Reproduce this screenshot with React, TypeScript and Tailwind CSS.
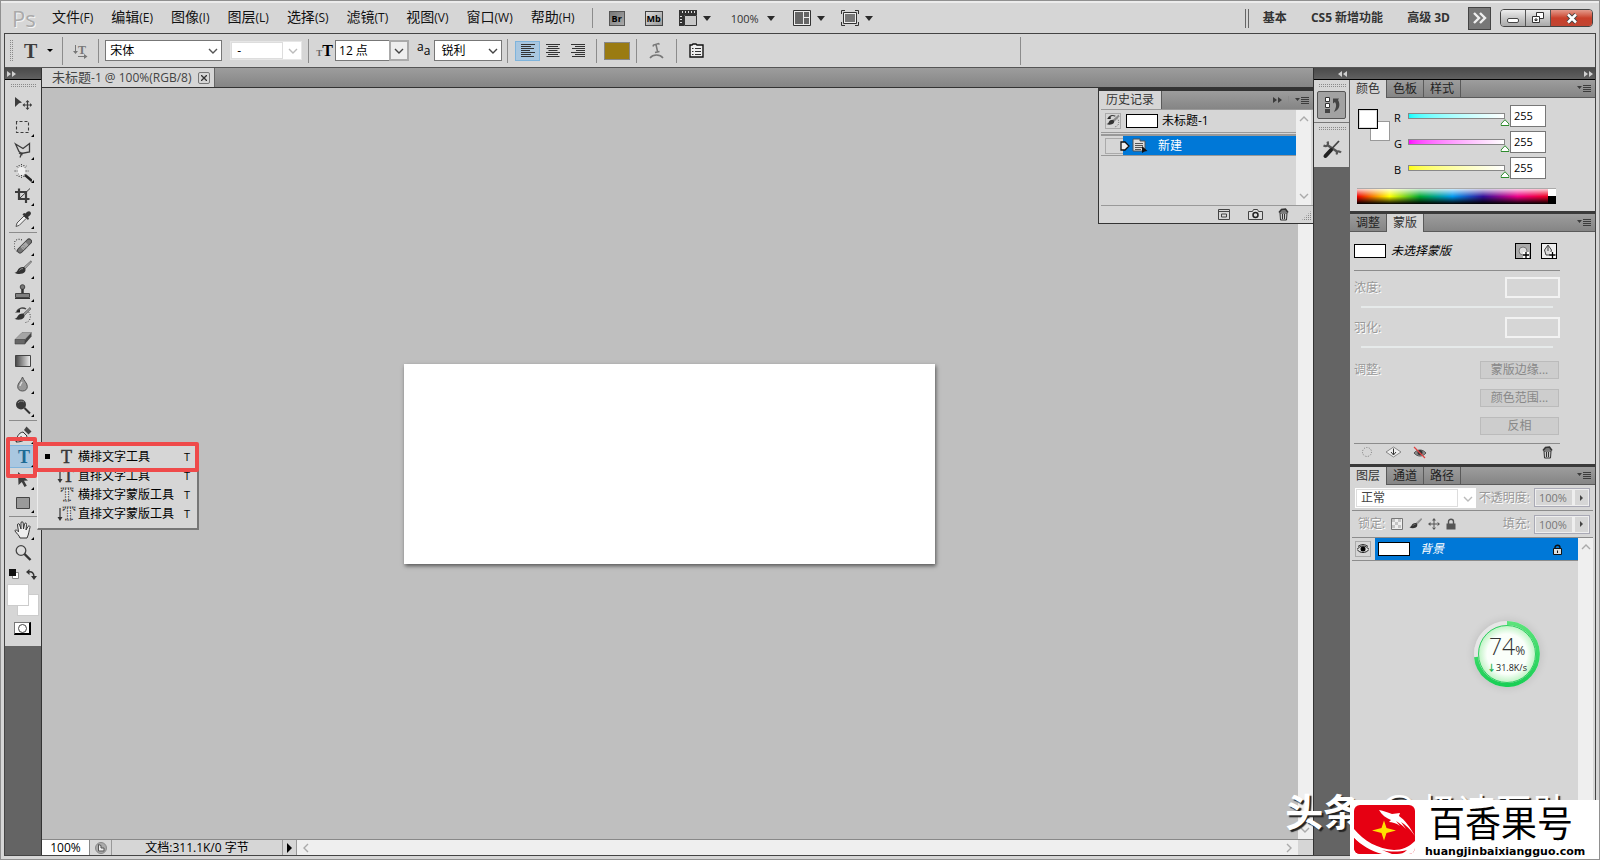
import { useState } from 'react';
import type { ReactNode } from 'react';
import clsx from 'clsx';

interface Tool {
  id: string;
  label: string;
  icon: ReactNode;
  hasMore: boolean;
}

interface ChannelProps {
  name: string;
  track: string;
}

const DARK = '#3c3c3c';

function Icon({ children, size = 18 }: { children: ReactNode; size?: number }) {
  return (
    <svg width={size} height={size} viewBox="0 0 18 18" fill="none" className="shrink-0">
      {children}
    </svg>
  );
}

const brushShape = (
  <>
    <path d="M17 .8 9.500 7.500l1.300 1.600L17.500 2z" fill="#b0b0b0" stroke="#555" strokeWidth=".7" />
    <path d="M10 7c-3-.5-5.500.8-6.500 3.500-.5 1.300-1.500 2-3 2.300 3 1.900 8.500 1.700 10.500-1 1-1.500.5-3.800-1-4.800z" fill="#333" />
    <path d="M5.500 10.500c1-1.500 2-2 3.500-1.800" stroke="#999" strokeWidth=".9" />
  </>
);

const historyBrush = (
  <>
    <path d="M3 5c2-3 6-4 9-2" stroke="#444" strokeWidth="1.500" />
    <path d="m1 6.500 5-3.500v3.500z" fill="#222" />
    <path d="M14.500 6c2 2 2.500 5 1 8-1 1.500-2 2-4 2.500" stroke="#444" strokeDasharray="1 1.500" />
    <path d="M16 1.500 9 8l1.500 1.500L16.800 3z" fill="#999" stroke="#444" strokeWidth=".6" />
    <path d="M9 7.500c-3 0-4.500 1-5.500 3-.5 1.200-1.500 2-3 2.300 3 1.400 7.500 1.200 9.500-1.300 1-1.500.3-3-1-4z" fill="#333" />
  </>
);

const toolGroups: Tool[][] = [
  [
    {
      id: 'move',
      label: '移动工具',
      hasMore: false,
      icon: (
        <>
          <path d="m1 2 7 5.500-3 .8L1 12z" fill={DARK} />
          <path d="M13.500 6v8M9.500 10h8" stroke={DARK} strokeWidth="1.200" />
          <path d="m13.500 5 2 2.200h-4zM13.500 15l2-2.200h-4zM8.500 10l2.200-2v4zM18 10l-2-2v4z" fill={DARK} />
        </>
      ),
    },
    {
      id: 'marquee',
      label: '矩形选框工具',
      hasMore: true,
      icon: <path d="M2.500 3.500v11h12v-11z" stroke={DARK} strokeWidth="1.100" strokeDasharray="3 2" />,
    },
    {
      id: 'lasso',
      label: '多边形套索工具',
      hasMore: true,
      icon: (
        <>
          <path d="M1.500 3 9 7.500 15.500 2.500v8.500L7.500 12.500 5 10.500z" stroke={DARK} strokeWidth="1.300" />
          <path d="m5 12 3.500 2M8 11.500 6 16.500" stroke={DARK} strokeWidth="1.300" />
        </>
      ),
    },
    {
      id: 'wand',
      label: '快速选择工具',
      hasMore: true,
      icon: (
        <>
          <path d="m11 11 7 6" stroke="#222" strokeWidth="2.500" />
          <circle cx="7.500" cy="7" r="4" fill="#eee" />
          <path d="M7.500 0v3M7.500 11v3M.5 7h3M11.500 7h3M2.500 2l2 2M12.500 2l-2 2M2.500 12l2-2M5 1l.5 2M10 1l-.5 2M10.500 10l2 2M5 13l.5-2M10 13l-.5-2" stroke={DARK} strokeDasharray="1.200 1" />
        </>
      ),
    },
    {
      id: 'crop',
      label: '裁剪工具',
      hasMore: true,
      icon: (
        <>
          <path d="M1 5h11v11M5 1.500V12h10.500" stroke={DARK} strokeWidth="2.200" />
          <path d="M5.500 11.500 16 1.500" stroke={DARK} />
        </>
      ),
    },
    {
      id: 'eyedropper',
      label: '吸管工具',
      hasMore: true,
      icon: (
        <>
          <path d="M2 16.500 3 13l7-7 2.300 2.300-7 7z" fill="#eee" stroke="#555" />
          <path d="m8.500 4.500 5.500 5.500 1-1.500-1-1.500C17 5 17.500 3.500 16.500 2c-1.200-1.500-3-1-5 1.500L10 3z" fill="#333" />
        </>
      ),
    },
  ],
  [
    {
      id: 'heal',
      label: '污点修复画笔工具',
      hasMore: true,
      icon: (
        <>
          <path d="M8 3C4 1 0 3 0 8c0 3 1 5 3 6.500" stroke="#222" strokeDasharray="1 1.500" />
          <path d="M6 13.500 15 4.500" stroke="#444" strokeWidth="6" strokeLinecap="round" />
          <path d="M6 13.500 15 4.500" stroke="#777" strokeWidth="4" strokeLinecap="round" />
          <path d="m8 11.500 5-5" stroke="#aaa" strokeWidth="4" />
          <path d="m8.500 10 3 3M10 8.500l3 3" stroke="#666" strokeDasharray="1 1" />
        </>
      ),
    },
    { id: 'brush', label: '画笔工具', hasMore: true, icon: brushShape },
    {
      id: 'stamp',
      label: '仿制图章工具',
      hasMore: true,
      icon: (
        <>
          <circle cx="8.500" cy="4" r="2.300" fill="#777" stroke="#444" />
          <path d="M8.500 6v5" stroke="#333" strokeWidth="2.500" />
          <path d="M1.500 10.500h14v4h-14z" fill="#808080" stroke="#444" />
          <path d="M1 15.500h15" stroke="#333" />
        </>
      ),
    },
    { id: 'history', label: '历史记录画笔工具', hasMore: true, icon: historyBrush },
    {
      id: 'eraser',
      label: '橡皮擦工具',
      hasMore: true,
      icon: (
        <>
          <path d="m1 10.500 7-7h9.500L11 10.500z" fill="#a5a5a5" stroke="#777" strokeWidth=".6" />
          <path d="M1 10.500h10v4.500H1z" fill="#666" stroke="#444" strokeWidth=".6" />
          <path d="m11 10.500 6.500-7v4L11 15z" fill="#444" />
        </>
      ),
    },
    {
      id: 'gradient',
      label: '渐变工具',
      hasMore: true,
      icon: (
        <>
          <defs>
            <linearGradient id="toolGradient">
              <stop stopColor="#444" />
              <stop offset="1" stopColor="#f0f0f0" />
            </linearGradient>
          </defs>
          <path d="M1.500 3.500h15v11h-15z" fill="url(#toolGradient)" stroke="#444" />
        </>
      ),
    },
    {
      id: 'blur',
      label: '模糊工具',
      hasMore: true,
      icon: (
        <>
          <path d="M8.500 2c1 3.500 4.800 6 4.800 9.500 0 2.800-2 4.500-4.800 4.500s-4.800-1.700-4.800-4.500C3.700 8 7.500 5.500 8.500 2z" fill="#999" stroke="#555" />
          <path d="M6 11c.2-1.500 1-2.500 2-4" stroke="#ddd" strokeWidth="1.400" />
        </>
      ),
    },
    {
      id: 'dodge',
      label: '减淡工具',
      hasMore: true,
      icon: (
        <>
          <circle cx="7" cy="6.500" r="5" fill="#3a3a3a" />
          <path d="M4 5c1-2 4-2.500 6-1" stroke="#888" />
          <path d="m10.500 10 5.500 5.500" stroke="#333" strokeWidth="2" />
        </>
      ),
    },
  ],
  [
    {
      id: 'pen',
      label: '钢笔工具',
      hasMore: true,
      icon: (
        <>
          <path d="M2 17c1-5 2-9 7-10l4 4c-1 4-5 6-11 6z" fill="#e8e8e8" stroke="#333" />
          <path d="m2 17 5.500-6" stroke="#333" />
          <path d="m10 5 2.500-3.500 5 5-3 3z" fill="#444" />
        </>
      ),
    },
    {
      id: 'type',
      label: '横排文字工具',
      hasMore: true,
      icon: (
        <text x="4" y="15" fontSize="18" fontWeight="bold" fontFamily="Liberation Serif, serif" fill="#1f6a94">
          T
        </text>
      ),
    },
    {
      id: 'select',
      label: '路径选择工具',
      hasMore: true,
      icon: <path d="m4 1 10 8.500-4 .3 2.800 5-2.300 1.200-2.700-5L4.500 14z" fill={DARK} />,
    },
    {
      id: 'shape',
      label: '矩形工具',
      hasMore: true,
      icon: <path d="M2.500 3.500h13v11h-13z" fill="#999" stroke="#444" />,
    },
  ],
  [
    {
      id: 'hand',
      label: '抓手工具',
      hasMore: true,
      icon: (
        <path
          d="M6 17c-1-3-3-4-5-7 0-1.500 1.500-1.500 3.500.8L3.500 4c0-1.800 1.800-1.800 2.200 0L7 8V2c0-1.800 2-1.800 2.200 0l.3 6 1-5c.5-1.500 2.200-1.300 2 .5L12 9l2-3.500c1-1.300 2.300-.5 2 .8C15 9 15 13 13 17z"
          fill="#eee"
          stroke="#333"
        />
      ),
    },
    {
      id: 'zoom',
      label: '缩放工具',
      hasMore: false,
      icon: (
        <>
          <circle cx="7" cy="6.500" r="4.800" fill="#ddd" stroke="#444" strokeWidth="1.300" />
          <path d="m10.500 10 6 6" stroke="#333" strokeWidth="2.400" />
        </>
      ),
    },
  ],
];

const menus = [
  ['文件', 'F'],
  ['编辑', 'E'],
  ['图像', 'I'],
  ['图层', 'L'],
  ['选择', 'S'],
  ['滤镜', 'T'],
  ['视图', 'V'],
  ['窗口', 'W'],
  ['帮助', 'H'],
];

const typeTools = [
  { label: '横排文字工具', vertical: false, mask: false },
  { label: '直排文字工具', vertical: true, mask: false },
  { label: '横排文字蒙版工具', vertical: false, mask: true },
  { label: '直排文字蒙版工具', vertical: true, mask: true },
];

function Caret() {
  return <span className="h-0 w-0 border-x-4 border-t-[5px] border-x-transparent border-t-[#2b2b2b]" />;
}

function Grip({ className }: { className?: string }) {
  return (
    <span
      className={clsx(
        'block bg-[conic-gradient(#8a8a8a_25%,transparent_25%)] bg-size-[2px_2px]',
        className,
      )}
    />
  );
}

function VLine({ className }: { className?: string }) {
  return <span className={clsx('w-px shrink-0 bg-[#8c8c8c]', className)} />;
}

function Chevron({ className }: { className?: string }) {
  return (
    <svg width="10" height="10" viewBox="0 0 10 10" fill="none" className={className}>
      <path d="m1 3 4 4 4-4" stroke="currentColor" strokeWidth="1.400" />
    </svg>
  );
}

function DoubleArrow({ left = false, color = '#d0d0d0' }: { left?: boolean; color?: string }) {
  return (
    <svg width="9" height="6" viewBox="0 0 9 6" fill={color} className={left ? 'rotate-180' : ''}>
      <path d="m0 0 4 3-4 3zM5 0l4 3-4 3z" />
    </svg>
  );
}

function PanelMenu() {
  return (
    <button aria-label="面板菜单" className="flex">
      <svg width="14" height="9" viewBox="0 0 14 9" fill="#3c3c3c">
        <path d="M0 2h5L2.500 5zM6 1h8v1H6zM6 3h8v1H6zM6 5h8v1H6zM6 7h8v1H6z" />
      </svg>
    </button>
  );
}

function TrashIcon() {
  return (
    <svg width="12" height="13" viewBox="0 0 12 13" fill="none">
      <path d="M2 5h7L8.500 12h-6z" fill="#ccc" stroke="#333" />
      <path d="M4.500 6v5M6.500 6v5" stroke="#333" />
      <path d="m1 4.500 2.500-3 4-.5L10 4.500" fill="#777" stroke="#333" strokeWidth="1.500" />
    </svg>
  );
}

function TabBar({ tabs, active }: { tabs: string[]; active: number }) {
  return (
    <div className="flex h-[18px] shrink-0 items-stretch border-b border-[#5a5a5a] bg-linear-to-b from-[#9d9d9d] to-[#858585]">
      {tabs.map((tab, index) => (
        <button
          key={tab}
          className={clsx(
            'flex w-[37px] items-center justify-center border-r border-[#5a5a5a] text-xs leading-none',
            index === active ? '-mb-px bg-[#d6d6d6] text-[#333]' : 'text-[#222]',
          )}
        >
          {tab}
        </button>
      ))}
      <div className="flex flex-1 items-center justify-end pr-1">
        <PanelMenu />
      </div>
    </div>
  );
}

function TypeGlyph({ vertical, mask }: { vertical: boolean; mask: boolean }) {
  return (
    <svg width="20" height="18" viewBox="0 0 20 18" fill="none">
      {vertical && (
        <>
          <path d="M3 3v11" stroke="#333" strokeWidth="1.200" />
          <path d="m.5 12 2.500 4 2.500-4z" fill="#333" />
        </>
      )}
      <text
        x={vertical ? 6 : 4}
        y="15"
        fontSize="18"
        fontWeight={mask ? 'bold' : 'normal'}
        fontFamily="Liberation Serif, serif"
        fill={mask ? '#eee' : '#3c3c3c'}
        stroke="#333"
        strokeWidth={mask ? '1' : '.5'}
        strokeDasharray={mask ? '1.500 1' : undefined}
      >
        T
      </text>
    </svg>
  );
}

function TypeFlyout() {
  return (
    <div className="absolute top-0 left-8 z-20 h-[85px] w-[162px] border border-r-2 border-b-2 border-[#ededed] border-r-[#777] border-b-[#777] bg-[#d6d6d6] pt-px">
      {typeTools.map((item, index) => (
        <button key={item.label} className="flex h-[19px] w-full items-center pr-[7px] text-xs leading-none text-black">
          <span className={clsx('mr-[7px] ml-[7px] h-[5px] w-[5px]', index === 0 && 'bg-black')} />
          <TypeGlyph vertical={item.vertical} mask={item.mask} />
          <span className="ml-px flex-1 text-left whitespace-nowrap">{item.label}</span>
          <span className="text-[11px]">T</span>
        </button>
      ))}
      <span className="pointer-events-none absolute -top-1 -left-1 h-[30px] w-[165px] rounded-xs border-4 border-[#ef4a4a]" />
    </div>
  );
}

function MenuBar() {
  return (
    <header className="flex h-8 shrink-0 items-center border-t-2 border-[#ececec] pr-[6px] text-[#111]">
      <span className="ml-[11px] w-[31px] text-[22px] leading-none text-[#aaa] [text-shadow:1px_1px_#f5f5f5]">Ps</span>
      <nav className="flex">
        {menus.map(([name, key]) => (
          <button key={key} className="px-[9px] text-sm leading-none whitespace-nowrap">
            {name}
            <span className="text-xs">({key})</span>
          </button>
        ))}
      </nav>
      <VLine className="mr-4 ml-2 h-5" />
      <button className="mr-5 h-[15px] w-4 border border-[#555] bg-linear-to-br from-[#777] to-[#aaa] text-[9px] leading-none font-bold text-black">Br</button>
      <button className="mr-4 h-[15px] w-[18px] border border-[#444] bg-linear-to-br from-[#ddd] to-[#999] text-[9px] leading-none font-bold text-black">Mb</button>
      <button aria-label="查看额外内容" className="mr-5 flex items-center gap-[6px]">
        <svg width="18" height="16" viewBox="0 0 18 16" fill="none">
          <path d="M0 0h18v5H5v11H0z" fill="#333" />
          <path d="M3.500 1v2M6.500 1v2M9.500 1v2M12.500 1v2M15.500 1v2M1 6.500h2M1 9.500h2M1 12.500h2" stroke="#ddd" />
          <path d="M5.500 5.500h12v10h-12z" fill="#c8c8c8" stroke="#333" />
        </svg>
        <Caret />
      </button>
      <button className="mr-[18px] flex items-center gap-2 text-[11px] leading-none text-[#333]">
        100% <Caret />
      </button>
      <button aria-label="排列文档" className="mr-4 flex items-center gap-[6px]">
        <svg width="18" height="16" viewBox="0 0 18 16" fill="none">
          <path d="M.5.5h17v15H.5z" fill="#eee" stroke="#333" />
          <path d="M2 2h8v12H2zM11 2h5v5h-5zM11 8h5v6h-5z" fill="#666" />
        </svg>
        <Caret />
      </button>
      <button aria-label="屏幕模式" className="flex items-center gap-[6px]">
        <svg width="18" height="16" viewBox="0 0 18 16" fill="none">
          <path d="M.5 4V.5H4M14 .5h3.500V4M.5 12v3.500H4M14 15.500h3.500V12" stroke="#333" />
          <path d="M2.500 2.500h13v11h-13z" fill="#eee" stroke="#333" />
          <path d="M4 4h10v8H4z" fill="#777" />
        </svg>
        <Caret />
      </button>

      <div className="flex-1" />

      <span className="mr-[14px] h-[19px] w-1 border-x border-[#666]" />
      <div className="mr-[18px] flex gap-6 text-xs leading-none font-bold text-[#333]">
        <button>基本</button>
        <button>CS5 新增功能</button>
        <button>高级 3D</button>
      </div>
      <button aria-label="更多工作区" className="mr-[9px] flex h-[23px] w-[23px] items-center justify-center border border-[#444] bg-[#777]">
        <svg width="16" height="12" viewBox="0 0 16 12" fill="none">
          <path d="m2 1 5 5-5 5M8 1l5 5-5 5" stroke="#eee" strokeWidth="2.400" />
        </svg>
      </button>
      <div className="flex h-[18px] overflow-hidden rounded border border-[#444]">
        <button aria-label="最小化" className="flex w-[25px] items-center justify-center border-r border-[#555] bg-linear-to-b from-[#eee] via-[#c8c8c8] to-[#aaa]">
          <span className="mt-1 h-[5px] w-3 rounded-xs border border-[#444] bg-white" />
        </button>
        <button aria-label="还原" className="flex w-[25px] items-center justify-center border-r border-[#555] bg-linear-to-b from-[#eee] via-[#c8c8c8] to-[#aaa]">
          <svg width="12" height="12" viewBox="0 0 12 12" fill="#fff" stroke="#333">
            <path d="M4.500.5h7v6h-7z" />
            <path d="M.5 4.500h7v6h-7z" />
            <path d="M3 7h2v1.500H3z" />
          </svg>
        </button>
        <button aria-label="关闭" className="flex w-[41px] items-center justify-center bg-linear-to-b from-[#e39a8c] via-[#c9402b] to-[#c04532]">
          <svg width="12" height="11" viewBox="0 0 12 11" fill="none">
            <path d="m2 1.500 8 8M10 1.500l-8 8" stroke="#444" strokeWidth="4.500" />
            <path d="m2 1.500 8 8M10 1.500l-8 8" stroke="#fff" strokeWidth="2.500" />
          </svg>
        </button>
      </div>
    </header>
  );
}

function AlignButton({ align, active }: { align: 'left' | 'center' | 'right'; active?: boolean }) {
  const widths = [14, 10, 13, 9, 14, 10, 13];
  return (
    <button
      aria-label={align}
      className={clsx('flex h-5 w-[25px] items-center justify-center border', active ? 'border-[#7fb4dc] bg-[#a9c7e0]' : 'border-transparent')}
    >
      <svg width="14" height="14" viewBox="0 0 14 14" fill="#333">
        {widths.map((w, i) => {
          const x = align === 'left' ? 0 : align === 'right' ? 14 - w : (14 - w) / 2;
          return <rect key={i} x={x} y={i * 2} width={w} height="1" />;
        })}
      </svg>
    </button>
  );
}

function OptionsBar() {
  return (
    <div className="flex h-[34px] shrink-0 items-center border-b border-[#555] text-xs text-black">
      <Grip className="ml-1 h-[22px] w-1" />
      <button aria-label="工具预设" className="ml-[11px] flex items-center gap-[10px]">
        <span className="font-['Liberation_Serif',serif] text-xl leading-none font-bold text-[#3c3c3c]">T</span>
        <span className="h-0 w-0 border-x-[3px] border-t-[3px] border-x-transparent border-t-black" />
      </button>
      <VLine className="ml-[9px] h-7" />
      <button aria-label="切换文本取向" className="ml-[10px]">
        <svg width="15" height="16" viewBox="0 0 15 16" fill="none">
          <path d="M2.500 2v8M5 13.500h8" stroke="#777" />
          <path d="m0 8 2.500 3L5 8zM11 11l3.500 2.500L11 16z" fill="#777" />
          <text x="5" y="11" fontSize="12" fontWeight="bold" fontFamily="Liberation Serif, serif" fill="#777">T</text>
        </svg>
      </button>
      <VLine className="ml-[10px] h-6" />
      <div className="relative ml-[6px] w-[117px] text-[#555]">
        <select aria-label="字体" className="block h-[21px] w-full appearance-none border border-[#777] bg-white pl-1 text-xs text-black">
          <option>宋体</option>
        </select>
        <Chevron className="pointer-events-none absolute top-[6px] right-1" />
      </div>
      <div className="relative ml-2 w-[72px] text-[#bbb]">
        <select aria-label="字体样式" className="block h-[19px] w-full appearance-none border border-[#e6e6e6] bg-white pl-[6px] text-xs text-black">
          <option>-</option>
        </select>
        <span className="pointer-events-none absolute inset-y-px left-px w-[52px] border border-[#ddd]" />
        <Chevron className="pointer-events-none absolute top-[5px] right-1" />
      </div>
      <VLine className="ml-[6px] h-6" />
      <span className="ml-[7px] flex items-baseline font-['Liberation_Serif',serif] leading-none font-bold">
        <span className="text-[9px] leading-none text-[#666]">T</span>
        <span className="text-base leading-none">T</span>
      </span>
      <div className="relative ml-[2px] w-[74px] text-[#444]">
        <select aria-label="字体大小" className="block h-[21px] w-full appearance-none border border-[#777] bg-white pl-[3px] text-xs text-black">
          <option>12 点</option>
        </select>
        <span className="pointer-events-none absolute inset-y-0 right-0 flex w-5 items-center justify-center border-2 border-[#aaa] bg-[#eee]">
          <Chevron />
        </span>
      </div>
      <span className="ml-2 flex text-xs leading-none">
        <span className="-mt-1 leading-none">a</span>
        <span className="leading-none">a</span>
      </span>
      <div className="relative ml-[4px] w-[68px] text-[#444]">
        <select aria-label="消除锯齿" className="block h-[21px] w-full appearance-none border border-[#777] bg-white pl-[6px] text-xs text-black">
          <option>锐利</option>
        </select>
        <Chevron className="pointer-events-none absolute top-[6px] right-1" />
      </div>
      <VLine className="mr-[7px] ml-[5px] h-6" />
      <AlignButton align="left" active />
      <AlignButton align="center" />
      <AlignButton align="right" />
      <VLine className="ml-[6px] h-6" />
      <button aria-label="文本颜色" className="ml-[7px] h-[18px] w-[26px] border border-[#888] bg-[#9a7b12]" />
      <VLine className="ml-[6px] h-6" />
      <button aria-label="变形文字" className="ml-3">
        <svg width="15" height="17" viewBox="0 0 15 17" fill="none">
          <path d="M4 4.500 4.500 3l5-1.500 1 1M7 2.500l1.500 7M6 10.500l4.500-1" stroke="#777" strokeWidth="1.500" />
          <path d="M1 16c3-4 10-4 13 0" stroke="#777" strokeWidth="1.500" />
        </svg>
      </button>
      <VLine className="ml-3 h-6" />
      <button aria-label="字符和段落面板" className="ml-3">
        <svg width="15" height="15" viewBox="0 0 15 15" fill="none">
          <path d="M1 2h2l1-1h3l1 1h6v12H1z" fill="#eee" stroke="#111" strokeWidth="1.400" />
          <path d="M3 5.500h1.500M3 8.500h1.500M3 11.500h1.500M6 5.500h6M6 8.500h6M6 11.500h6" stroke="#333" />
        </svg>
      </button>
      <VLine className="ml-[316px] h-7" />
    </div>
  );
}

function Toolbar() {
  const [selected, setSelected] = useState('type');

  return (
    <aside className="relative z-10 flex w-[37px] shrink-0 flex-col border-r border-[#333] bg-[#646464]">
      <div className="flex h-3 items-center border-b border-black bg-linear-to-b from-[#4a4a4a] to-[#606060] pl-[2px]">
        <DoubleArrow />
      </div>
      <div className="flex h-[566px] flex-col bg-[#d6d6d6]">
        <div className="flex h-3 items-center justify-center">
          <Grip className="h-1 w-[26px]" />
        </div>
        {toolGroups.map((group, index) => (
          <div key={index}>
            {index > 0 && (
              <div className="flex h-1 items-center px-1">
                <span className="h-px w-full bg-[#8c8c8c]" />
              </div>
            )}
            {group.map((tool) => (
              <div key={tool.id} className="relative h-[23px]">
                <button
                  aria-label={tool.label}
                  onClick={() => setSelected(tool.id)}
                  className={clsx(
                    'relative ml-1 flex h-full w-7 items-center justify-center border',
                    selected === tool.id ? 'border-[#7fb4dc] bg-[#a9c7e0]' : 'border-transparent',
                  )}
                >
                  <Icon>{tool.icon}</Icon>
                  {tool.hasMore && (
                    <span className="absolute right-[2px] bottom-0 border-b-3 border-l-3 border-b-black border-l-transparent" />
                  )}
                </button>
                {tool.id === 'type' && (
                  <>
                    <span className="pointer-events-none absolute -top-2 left-px z-30 h-[41px] w-[31px] rounded-xs border-4 border-[#ef4a4a]" />
                    <TypeFlyout />
                  </>
                )}
              </div>
            ))}
          </div>
        ))}
        <div className="flex h-5 items-center justify-between px-1 pt-px">
          <svg width="11" height="11" viewBox="0 0 11 11">
            <path d="M3.500 3.500h6v6h-6z" fill="#fff" stroke="#888" />
            <path d="M0 0h7v7H0z" fill="#111" />
          </svg>
          <svg width="11" height="11" viewBox="0 0 11 11" fill="none">
            <path d="M2 3c4-1 6 1 6 5" stroke="#333" strokeWidth="1.400" />
            <path d="m0 3 3.500-3v6zM5 7h6l-3 4z" fill="#333" />
          </svg>
        </div>
        <div className="relative ml-[2px] h-8 w-8">
          <button aria-label="背景色" className="absolute right-0 bottom-0 h-[22px] w-[22px] border border-[#ccc] bg-white" />
          <button aria-label="前景色" className="absolute top-0 left-0 h-[22px] w-[22px] border border-[#ccc] bg-white" />
        </div>
        <button aria-label="快速蒙版" className="mt-[6px] ml-[9px] flex h-[13px] w-[17px] items-center justify-center border border-r-2 border-b-2 border-[#777] border-r-black border-b-black bg-white">
          <span className="h-[9px] w-[9px] rounded-full border border-[#444]" />
        </button>
      </div>
    </aside>
  );
}

function HistoryPanel() {
  return (
    <section className="absolute top-0 right-0 z-10 flex h-[136px] w-[215px] flex-col border border-t-3 border-r-0 border-[#333] bg-[#d6d6d6] text-xs leading-none text-black">
      <div className="flex h-[18px] items-stretch bg-linear-to-b from-[#9d9d9d] to-[#858585]">
        <button className="flex w-[63px] items-center justify-center border-r border-[#5a5a5a] bg-[#d6d6d6] text-[#333]">历史记录</button>
        <div className="flex flex-1 items-center justify-end gap-[6px] pr-1">
          <DoubleArrow color="#3c3c3c" />
          <VLine className="h-2" />
          <PanelMenu />
        </div>
      </div>
      <div className="ml-[2px] flex flex-1 border-y border-[#999]">
        <div className="flex-1">
          <div className="flex h-[23px] items-center border-b border-[#999]">
            <span className="ml-1 flex h-4 w-4 items-center justify-center border border-[#aaa]">
              <Icon size={14}>{historyBrush}</Icon>
            </span>
            <span className="ml-[5px] h-[14px] w-8 border border-black bg-white" />
            <span className="ml-1">未标题-1</span>
          </div>
          <div className="mt-px flex h-[22px] items-center border-t-2 border-b border-[#999]">
            <span className="ml-1 h-4 w-[18px] border border-r-0 border-[#aaa]" />
            <div className="relative flex h-full flex-1 items-center bg-[#0078d7] text-white">
              <svg width="10" height="10" viewBox="0 0 10 10" className="absolute -left-[3px]">
                <path d="M1 1h4l4 4-4 4H1z" fill="#eee" stroke="#111" strokeWidth="1.300" />
              </svg>
              <svg width="16" height="15" viewBox="0 0 16 15" fill="none" className="ml-[9px]">
                <path d="M1 1h7v2h5v10H1z" fill="#ddd" stroke="#555" />
                <path d="M3 5.500h8M3 7.500h8M3 9.500h8M3 11.500h6" stroke="#555" />
                <path d="m10 8 5.500 5-3 .5-2.500 1.500z" fill="#111" />
              </svg>
              <span className="ml-[10px]">新建</span>
            </div>
          </div>
        </div>
        <div className="mr-[2px] flex w-[15px] flex-col items-center justify-between bg-[#efefef] py-1 text-[#aaa]">
          <Chevron className="rotate-180" />
          <Chevron />
        </div>
      </div>
      <div className="flex h-[17px] items-center justify-end pr-[2px] pb-px">
        <svg width="12" height="11" viewBox="0 0 12 11" fill="none" className="mr-[18px]">
          <path d="M.5.5h11v10H.5zM.5 2.500h11M3.500 5h5v3h-5z" stroke="#444" />
        </svg>
        <svg width="15" height="11" viewBox="0 0 15 11" fill="none" className="mr-[15px]">
          <path d="M.5 2.500h4l1-2h4l1 2h4v8H.5z" fill="#ddd" stroke="#444" />
          <circle cx="7.500" cy="6" r="2.500" stroke="#222" strokeWidth="1.500" />
        </svg>
        <TrashIcon />
        <Grip className="mt-1 ml-[11px] h-[10px] w-[10px] [clip-path:polygon(100%_0,100%_100%,0_100%)]" />
      </div>
    </section>
  );
}

function DocumentArea() {
  return (
    <main className="flex min-w-0 flex-1 flex-col">
      <div className="flex h-5 shrink-0 items-stretch border-b border-[#333] bg-linear-to-b from-[#9d9d9d] to-[#858585]">
        <div className="flex items-center border-r border-[#666] bg-[#d6d6d6] pr-1 pl-[10px] text-[13px] leading-none whitespace-nowrap text-[#444]">
          未标题
          <span className="text-xs leading-none">-1 @ 100%(RGB/8)</span>
          <button aria-label="关闭文档" className="ml-[7px] flex h-3 w-3 items-center justify-center rounded-xs border border-[#777]">
            <svg width="6" height="6" viewBox="0 0 6 6">
              <path d="m0 0 6 6M6 0 0 6" stroke="#333" strokeWidth="1.300" />
            </svg>
          </button>
        </div>
      </div>
      <div className="relative flex min-h-0 flex-1">
        <div className="flex flex-1 items-center justify-center bg-[#bfbfbf] pr-px">
          <div className="h-[200px] w-[531px] bg-white shadow-[1px_2px_4px_rgba(0,0,0,0.55)]" />
        </div>
        <div className="flex w-[15px] flex-col justify-end bg-[#efefef] pb-1 pl-[2px] text-[#aaa]">
          <Chevron />
        </div>
        <HistoryPanel />
      </div>
      <div className="flex h-4 shrink-0 border-t border-[#888] bg-[#d6d6d6] text-xs leading-none text-black">
        <input aria-label="显示比例" defaultValue="100%" className="w-12 border-r border-[#888] bg-white text-center leading-none" />
        <span className="flex w-[22px] items-center justify-center border-r border-[#999]">
          <svg width="12" height="12" viewBox="0 0 12 12" fill="none">
            <circle cx="6" cy="6" r="5.500" fill="#aaa" stroke="#888" />
            <path d="M3.500 2.500v6.500H9V6H6V3.500z" fill="#eee" stroke="#555" />
          </svg>
        </span>
        <span className="flex w-[171px] items-center justify-center border-r border-[#999]">文档:311.1K/0 字节</span>
        <button aria-label="状态栏选项" className="flex w-[14px] items-center justify-center border-r border-[#999]">
          <span className="border-y-[5px] border-l-[5px] border-y-transparent border-l-black" />
        </button>
        <div className="flex flex-1 items-center justify-between bg-[#efefef] px-1 text-[#aaa]">
          <Chevron className="rotate-90" />
          <Chevron className="-rotate-90" />
        </div>
        <span className="w-[15px]" />
      </div>
    </main>
  );
}

function Channel({ name, track }: ChannelProps) {
  const [value, setValue] = useState(255);

  return (
    <div className="flex h-[22px] items-center">
      <label htmlFor={`channel-${name}`} className="w-[14px] pt-[2px] text-[11px]">
        {name}
      </label>
      <div className="relative h-[14px] w-[97px]">
        <div className={clsx('mt-1 h-[6px] border border-[#888] bg-linear-to-r to-white', track)} />
        <svg
          width="9"
          height="7"
          viewBox="0 0 9 7"
          className="absolute top-[10px] -translate-x-1/2"
          style={{ left: `${(value / 255) * 100}%` }}
        >
          <path d="M4.500.7 8.500 5v1.500h-8V5z" fill="#fff" stroke="#2e8b2e" />
        </svg>
        <input
          id={`channel-${name}`}
          type="range"
          min={0}
          max={255}
          value={value}
          onChange={(e) => setValue(Number(e.target.value))}
          className="absolute inset-0 w-full opacity-0"
        />
      </div>
      <input
        aria-label={`${name} 值`}
        value={value}
        onChange={(e) => setValue(Number(e.target.value) || 0)}
        className="ml-[5px] h-[22px] w-9 border border-[#777] bg-white pb-[2px] pl-[3px] text-[11px]"
      />
    </div>
  );
}

function ColorPanel() {
  return (
    <section className="shrink-0 border-b-3 border-[#3a3a3a]">
      <TabBar tabs={['颜色', '色板', '样式']} active={0} />
      <div className="h-[113px] px-[7px] pt-[7px]">
        <div className="flex">
          <div className="relative mt-1 mr-1 ml-px h-8 w-8">
            <span className="absolute right-0 bottom-0 h-5 w-5 border border-[#999] bg-white" />
            <span className="absolute top-0 left-0 h-5 w-5 border border-black bg-white outline-1 -outline-offset-2 outline-[#ddd]" />
          </div>
          <div className="flex flex-col gap-1">
            <Channel name="R" track="from-[#00ffff]" />
            <Channel name="G" track="from-[#ff00ff]" />
            <Channel name="B" track="from-[#ffff00]" />
          </div>
        </div>
        <div className="mt-[9px] flex h-4 w-[199px] border-t border-[#aaa]">
          <div className="relative flex-1 bg-[linear-gradient(to_right,#e00,#ff0_17%,#0a3_33%,#09e_50%,#319_66%,#e08_84%,#e02)]">
            <div className="absolute inset-0 bg-linear-to-b from-white/80 via-transparent to-black" />
          </div>
          <div className="w-2 bg-linear-to-b from-white from-50% to-black to-50%" />
        </div>
      </div>
    </section>
  );
}

function MaskPanel() {
  const etched = 'text-[#999] [text-shadow:1px_1px_#fff]';
  return (
    <section className="shrink-0 border-b-3 border-[#3a3a3a]">
      <TabBar tabs={['调整', '蒙版']} active={1} />
      <div className="mr-[35px] ml-1 h-[232px]">
        <div className="flex h-[39px] items-center border-b border-[#8c8c8c]">
          <span className="h-[14px] w-8 border border-black bg-white" />
          <span className="ml-[5px] flex-1 text-black italic">未选择蒙版</span>
          <button aria-label="添加像素蒙版" className="mr-[10px] flex h-4 w-4 border border-black bg-[#aaa]">
            <svg width="14" height="14" viewBox="0 0 14 14" fill="none">
              <circle cx="7" cy="7" r="4" fill="#ddd" stroke="#777" />
              <path d="M7 8h6v6H7z" fill="#fff" />
              <path d="M10 8v6M7 11h6" stroke="#000" strokeWidth="1.300" />
            </svg>
          </button>
          <button aria-label="添加矢量蒙版" className="mr-[3px] flex h-4 w-4 border border-black bg-[#eee]">
            <svg width="14" height="14" viewBox="0 0 14 14" fill="none">
              <path d="m6 1 3.500 5L8 11H4L2.500 6zM6 2v5" fill="#ddd" stroke="#444" />
              <path d="M8 8h5v6H8z" fill="#fff" />
              <path d="M10.500 8v6M7.500 11h6" stroke="#000" strokeWidth="1.300" />
            </svg>
          </button>
        </div>
        {['浓度', '羽化'].map((label) => (
          <div key={label} className="h-10">
            <div className="flex h-[35px] items-center justify-between pb-[2px]">
              <label htmlFor={label} className={etched}>{label}:</label>
              <input id={label} disabled className="h-[21px] w-[55px] border-2 border-[#f2f2f2] bg-transparent" />
            </div>
            <div className="mr-[7px] ml-[7px] h-[2px] bg-[#e6eaea]" />
          </div>
        ))}
        <div className="mt-[10px] flex items-start justify-between pr-px">
          <span className={clsx('mt-[3px]', etched)}>调整:</span>
          <div className="flex w-[79px] flex-col gap-[10px]">
            {['蒙版边缘...', '颜色范围...', '反相'].map((label) => (
              <button key={label} disabled className="h-[18px] border border-[#bbb] bg-[#cdcdcd] text-xs leading-none text-[#888]">
                {label}
              </button>
            ))}
          </div>
        </div>
        <div className="mt-2 flex h-[17px] items-center border-t border-[#8c8c8c] pl-[7px]">
          <svg width="12" height="12" viewBox="0 0 12 12" fill="none">
            <circle cx="6" cy="6" r="4.500" stroke="#777" strokeDasharray="1 1.500" />
          </svg>
          <svg width="17" height="12" viewBox="0 0 17 12" fill="none" className="ml-3">
            <path d="m1 6 7.500-5L16 6l-7.500 5z" fill="#eee" stroke="#888" />
            <path d="M8.500 2.500v6M6 6l2.500 3L11 6" stroke="#333" />
          </svg>
          <svg width="14" height="13" viewBox="0 0 14 13" fill="none" className="ml-[11px]">
            <path d="M1 7c3-4 9-4 12 0-3 4-9 4-12 0z" fill="#888" stroke="#555" />
            <circle cx="7" cy="6.500" r="2.500" fill="#333" />
            <path d="m1 1 11 11" stroke="#e04040" strokeWidth="1.300" />
          </svg>
          <span className="flex-1" />
          <span className="mr-[6px]">
            <TrashIcon />
          </span>
        </div>
      </div>
    </section>
  );
}

function PercentField({ label }: { label: string }) {
  return (
    <div className="flex items-center gap-1">
      <label htmlFor={label} className="text-[#999] [text-shadow:1px_1px_#fff]">{label}:</label>
      <div className="flex h-[19px] w-14 border border-[#a9a9b5] text-[#777]">
        <input id={label} disabled defaultValue="100%" className="w-[38px] border border-[#eee] pl-[3px] text-[11px]" />
        <span className="flex flex-1 items-center justify-center border border-l-2 border-[#eee]">
          <span className="border-y-3 border-l-3 border-y-transparent border-l-[#444]" />
        </span>
      </div>
    </div>
  );
}

function LayersPanel() {
  return (
    <section className="flex min-h-0 flex-1 flex-col">
      <TabBar tabs={['图层', '通道', '路径']} active={0} />
      <div className="mx-[2px] flex h-[26px] shrink-0 items-center justify-between border-b border-[#8c8c8c] pr-[3px] pl-[3px]">
        <div className="relative w-[121px] text-[#bbb]">
          <select aria-label="混合模式" className="block h-5 w-full appearance-none bg-white pl-[6px] text-xs text-[#444]">
            <option>正常</option>
          </select>
          <span className="pointer-events-none absolute inset-y-px left-px w-[102px] border border-[#ddd]" />
          <Chevron className="pointer-events-none absolute top-[6px] right-[3px]" />
        </div>
        <PercentField label="不透明度" />
      </div>
      <div className="mx-[2px] flex h-[27px] shrink-0 items-center border-b border-[#8c8c8c] pr-[3px] pl-[6px]">
        <span className="text-[#999] [text-shadow:1px_1px_#fff]">锁定:</span>
        <div className="ml-[6px] flex flex-1 items-center gap-[6px]">
          <svg width="12" height="12" viewBox="0 0 12 12">
            <path d="M.5.5h11v11H.5z" fill="#eee" stroke="#777" />
            <path d="M1 1h3v3H1zM7 1h3v3H7zM4 4h3v3H4zM1 7h3v3H1zM7 7h3v3H7z" fill="#c4c4c4" />
          </svg>
          <Icon size={13}>{brushShape}</Icon>
          <svg width="12" height="12" viewBox="0 0 12 12" fill="#555">
            <path d="M5.500 2h1v8h-1zM2 5.500h8v1H2zM6 0l2 2.500H4zM6 12l2-2.500H4zM0 6l2.500-2v4zM12 6 9.500 4v4z" />
          </svg>
          <svg width="10" height="12" viewBox="0 0 10 12" fill="none">
            <path d="M2.500 6V3.500c0-3 5-3 5 0V6" stroke="#555" strokeWidth="1.400" />
            <path d="M.5 5.500h9v6h-9z" fill="#555" />
          </svg>
        </div>
        <PercentField label="填充" />
      </div>
      <div className="mx-[2px] flex min-h-0 flex-1">
        <div className="flex-1">
          <div className="flex h-[23px] items-center border-b border-[#8c8c8c]">
            <button aria-label="图层可见性" className="ml-[3px] flex h-4 w-4 items-center justify-center border border-[#aaa]">
              <svg width="12" height="10" viewBox="0 0 12 10" fill="none">
                <path d="M0 5.500c3-4.500 9-4.500 12 0-3 4-9 4-12 0z" fill="#ddd" stroke="#222" />
                <circle cx="6" cy="5" r="2.500" fill="#000" />
                <path d="M1 2.500C4 0 8 0 11 2.500" stroke="#222" />
              </svg>
            </button>
            <div className="ml-1 flex h-full flex-1 items-center bg-[#0078d7] pr-4 pl-[3px] text-white">
              <span className="h-[14px] w-8 border border-black bg-white" />
              <span className="ml-[10px] flex-1 italic">背景</span>
              <svg width="9" height="11" viewBox="0 0 9 11" fill="none">
                <path d="M2 5V3.500c0-3 5-3 5 0V5" stroke="#111" strokeWidth="1.400" />
                <path d="M.5 4.500h8v6h-8z" fill="#ddd" stroke="#111" />
                <path d="M4.500 6.500V9" stroke="#111" />
              </svg>
            </div>
          </div>
        </div>
        <div className="flex w-[15px] justify-center bg-[#efefef] pt-1 text-[#aaa]">
          <Chevron className="rotate-180" />
        </div>
      </div>
    </section>
  );
}

function RightDock() {
  return (
    <aside className="flex w-[282px] shrink-0 flex-col border-l border-[#333]">
      <div className="flex h-3 shrink-0 items-center justify-between border-b border-black bg-linear-to-b from-[#4a4a4a] to-[#606060] pr-[2px] pl-6">
        <DoubleArrow left />
        <DoubleArrow />
      </div>
      <div className="flex min-h-0 flex-1">
        <div className="w-9 shrink-0 bg-[#646464]">
          <div className="flex h-[43px] w-[35px] flex-col items-center border-b border-[#777] bg-[#d6d6d6]">
            <Grip className="my-1 h-[3px] w-7" />
            <button aria-label="历史记录" className="flex h-7 w-[29px] items-center justify-center rounded-xs border border-[#555] bg-[#a2a2a2]">
              <svg width="18" height="18" viewBox="0 0 18 18" fill="none">
                <path d="M2.500 1.500h4v4h-4zM2.500 7.500h4v4h-4z" fill="#fff" stroke="#333" />
                <path d="M2 13h5v4H2z" fill="#444" />
                <path d="M10 2.500h6L15 4c3 5 1 10-4 12 2-4 3-7 1-10l-2 1.500z" fill="#444" />
              </svg>
            </button>
          </div>
          <div className="flex h-11 w-[35px] flex-col items-center bg-[#d6d6d6]">
            <Grip className="my-1 h-[3px] w-7" />
            <button aria-label="工具预设" className="mt-[5px]">
              <svg width="20" height="20" viewBox="0 0 20 20" fill="none">
                <path d="m6 6.500 9 6" stroke="#555" strokeWidth="2.500" />
                <path d="M1.500 6.500c3 1.500 5.500 0 4-4M19 13.500c-2-2-5-1.500-4 2" stroke="#555" strokeWidth="2.200" />
                <path d="M17 2 9.500 10" stroke="#444" strokeWidth="1.800" />
                <path d="m9 11-5.500 6" stroke="#222" strokeWidth="4" strokeLinecap="round" />
              </svg>
            </button>
          </div>
        </div>
        <div className="flex min-w-0 flex-1 flex-col bg-[#d6d6d6] text-xs leading-none text-black">
          <ColorPanel />
          <MaskPanel />
          <LayersPanel />
        </div>
      </div>
    </aside>
  );
}

function SpeedBall() {
  return (
    <div className="absolute top-5/7 right-[59px] z-30 mt-[7px] h-[66px] w-[66px] rounded-full shadow-[0_0_10px_rgba(0,0,0,0.12)]">
      <svg width="66" height="66" viewBox="0 0 66 66" fill="none">
        <defs>
          <radialGradient id="ballFill">
            <stop offset=".7" stopColor="#fafffa" />
            <stop offset="1" stopColor="#bff3c4" />
          </radialGradient>
          <linearGradient id="ballRing" x2="0" y2="1">
            <stop stopColor="#5be37a" />
            <stop offset="1" stopColor="#19cf55" />
          </linearGradient>
        </defs>
        <circle cx="33" cy="33" r="31" stroke="#e6e6e6" strokeWidth="4" />
        <circle cx="33" cy="33" r="28.500" fill="url(#ballFill)" stroke="#2ed162" />
        <path d="M33 2a31 31 0 1 1-31 34" stroke="url(#ballRing)" strokeWidth="4" />
      </svg>
      <div className="absolute inset-x-0 top-[14px] text-center leading-none text-[#333]">
        <span className="text-[23px] leading-none font-light">74</span>
        <span className="text-xs">%</span>
      </div>
      <div className="absolute inset-x-0 top-[42px] text-center text-[9px] leading-none whitespace-nowrap text-[#222]">
        <span className="font-bold text-[#18b04a]">↓</span>31.8K/s
      </div>
    </div>
  );
}

function Watermark() {
  return (
    <>
      <div className="absolute right-[30px] bottom-[29px] z-30 flex items-end text-[37px] leading-none whitespace-nowrap text-white [text-shadow:2px_2px_1px_#222]">
        <span className="mr-[18px] text-[38px] leading-none font-bold">头条</span>
        <span className="mr-1 text-[42px] leading-none">@</span>
        <span>极速互助</span>
      </div>
      <div className="absolute right-0 bottom-0 z-40 flex h-[59px] w-[249px] items-center bg-white pl-1">
        <svg width="62" height="50" viewBox="0 0 62 50">
          <defs>
            <clipPath id="logoClip">
              <rect width="61" height="49" rx="6" />
            </clipPath>
          </defs>
          <g clipPath="url(#logoClip)">
            <path d="M0 0h61v49H0z" fill="#e60012" />
            {/* ribbon that leaves the lower right corner white */}
            <path d="M0 24c10 12 24 20 40 21 8 0 15-3 21-9v13H28C17 46 7 40 0 33z" fill="#fff" />
            <path d="M0 33c6 7 14 12 23 16H0z" fill="#e60012" />
            <path d="M28 45c8 2 17 2 25 0-3 3-6 4-10 4h-5z" fill="#e60012" />
          </g>
          <path d="M30 15.500 32.500 23 42 25.500 32.500 28 30 35.500 27.500 28 18 25.500l9.500-2.500z" fill="#ffe100" />
          <path d="M25 5c5 1 8 2 13 4l8-1-1 3c6 4 11 11 16 20-5-7-9-11-14-14l5 7c-4-4-7-6-10-8l4 5c-4-3-8-4-11-4l2-2c-5-2-9-5-12-10z" fill="#fff" />
        </svg>
        <div className="ml-[13px] flex flex-col gap-1 pt-1 text-black">
          <span className="text-[36px] leading-none">百香果号</span>
          <span className="-ml-1 font-['DejaVu_Sans',sans-serif] text-[11px] leading-none font-bold">huangjinbaixiangguo.com</span>
        </div>
      </div>
    </>
  );
}

export default function App() {
  return (
    <div className="relative flex h-screen min-w-0 flex-col overflow-hidden border border-[#909090] bg-[#d6d6d6] font-['Open_Sans','Noto_Sans_CJK_SC',sans-serif]">
      <MenuBar />
      <div className="mx-[3px] mb-[3px] flex min-h-0 flex-1 flex-col border border-[#444]">
        <OptionsBar />
        <div className="flex min-h-0 flex-1">
          <Toolbar />
          <DocumentArea />
          <RightDock />
        </div>
      </div>
      <SpeedBall />
      <Watermark />
    </div>
  );
}
